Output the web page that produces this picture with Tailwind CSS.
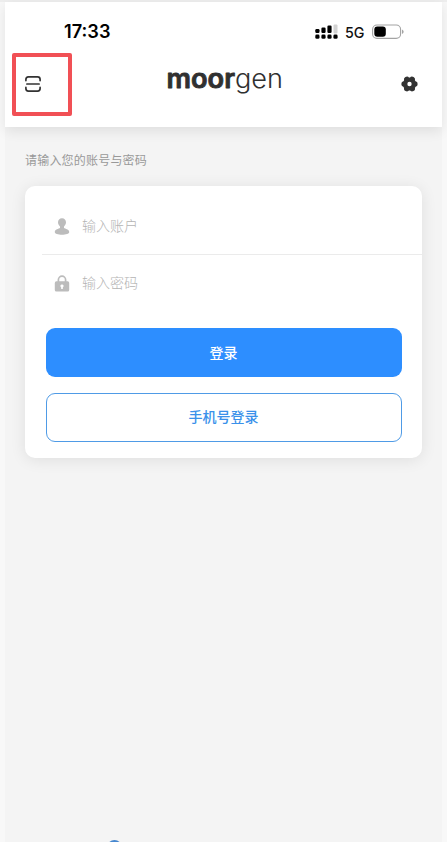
<!DOCTYPE html>
<html lang="zh-CN">
<head>
    <meta charset="UTF-8">
    <meta name="viewport" content="width=device-width, initial-scale=1.0">
    <title>moorgen</title>
    <script src="https://cdn.jsdelivr.net/npm/@tailwindcss/browser@4"></script>
</head>
<body class="h-screen overflow-hidden bg-[#f8f8f8] font-['Inter','Noto_Sans_CJK_SC',sans-serif]">
    <div class="h-screen flex flex-col border-t-2 border-[#eeeeee]">
        <div class="flex-1 min-h-0 ml-[5px] mr-[5px] flex flex-col bg-[#f4f4f4]">

            <header class="h-[125px] shrink-0 bg-white shadow-[0_4px_12px_rgba(0,0,0,0.09)]">
                <!-- Status bar -->
                <div class="h-[51px] pt-[9px] pl-[59px] pr-[37px] flex items-center justify-between">
                    <svg class="w-[48px] h-6" viewBox="0 0 48 24">
                        <text x="0" y="18" font-size="18" font-weight="600" textLength="46.5" lengthAdjust="spacingAndGlyphs" fill="#000">17:33</text>
                    </svg>
                    <div class="flex items-center">
                        <svg class="w-6 h-4" viewBox="0 0 24 16">
                            <g fill="#000">
                                <rect x="0.3" y="5" width="4.2" height="4" rx="1.2"/>
                                <rect x="6.4" y="3.5" width="4.2" height="5.5" rx="1.2"/>
                                <rect x="12.4" y="1.5" width="4.2" height="7.5" rx="1.2"/>
                                <rect x="0.3" y="10.6" width="4.2" height="4.2" rx="1.4"/>
                                <rect x="6.4" y="10.6" width="4.2" height="4.2" rx="1.4"/>
                                <rect x="12.4" y="10.6" width="4.2" height="4.2" rx="1.4"/>
                                <rect x="18.4" y="10.6" width="4.2" height="4.2" rx="1.4"/>
                            </g>
                            <rect x="18.5" y="0.5" width="4" height="9" rx="1" fill="#d2d2d2"/>
                        </svg>
                        <svg class="w-5 h-6 ml-[6px]" viewBox="0 0 20 24">
                            <text x="0" y="17.5" font-size="15" font-weight="500" textLength="19.5" lengthAdjust="spacingAndGlyphs" fill="#111">5G</text>
                        </svg>
                        <svg class="w-[33px] h-4 ml-[7px]" viewBox="0 0 33 16">
                            <rect x="0.6" y="1" width="28" height="13.4" rx="4.4" fill="#fff" stroke="#a3a3a3" stroke-width="1.1"/>
                            <rect x="2.3" y="2.6" width="11.5" height="10.2" rx="3" fill="#000"/>
                            <path d="M30.2 5.6c1.8.8 1.8 3.6 0 4.4z" fill="#8f8f8f"/>
                        </svg>
                    </div>
                </div>

                <!-- Navigation bar -->
                <div class="h-[63px] pl-[7px] pr-[24px] flex items-center justify-between">
                    <div class="w-[60px] h-[63px] border-4 border-[#f15055] rounded-[2px] pl-[9px] pb-px flex items-center">
                        <svg class="w-4 h-4" viewBox="0 0 16 16" fill="none" stroke="#333" stroke-width="1.7" stroke-linecap="round" stroke-linejoin="round">
                            <path d="M0.9 4.6V3.4Q0.9 0.9 3.4 0.9H12.6Q15.1 0.9 15.1 3.4V4.6"/>
                            <path d="M1.9 8H14.1"/>
                            <path d="M0.9 11.4V12.6Q0.9 15.1 3.4 15.1H12.6Q15.1 15.1 15.1 12.6V11.4"/>
                        </svg>
                    </div>
                    <!-- Wordmark: heavy rounded "moor", thin "gen" -->
                    <svg class="w-[120px] h-[48px] ml-[-24px]" viewBox="0 0 120 48" fill="#303030">
                        <text x="1.5" y="26.6" font-size="26" font-weight="600" textLength="68.5" lengthAdjust="spacingAndGlyphs" stroke="#303030" stroke-width="0.8" stroke-linejoin="round">moor</text>
                        <text x="70" y="26.8" font-size="26.5" font-weight="300" textLength="48" lengthAdjust="spacingAndGlyphs">gen</text>
                    </svg>
                    <svg class="w-[17px] h-4 mb-px" viewBox="0 0 17 16">
                        <g stroke="#333" stroke-width="5.4" stroke-linecap="round">
                            <path d="M3.1 8H13.9"/>
                            <path d="M5.8 3.3L11.2 12.7"/>
                            <path d="M11.2 3.3L5.8 12.7"/>
                        </g>
                        <circle cx="8.5" cy="8" r="6.6" fill="#333"/>
                        <circle cx="8.5" cy="8" r="2.2" fill="#fff"/>
                    </svg>
                </div>
            </header>

            <main class="pl-[20px] pr-[20px] pt-[25px]">
                <p class="h-[18px] text-xs leading-[18px] tracking-[0.2px] text-[#999]">请输入您的账号与密码</p>

                <form class="mt-[16px] h-[272px] rounded-[10px] bg-white pt-[12px] shadow-[0_2px_16px_rgba(0,0,0,0.09)]">
                    <label class="ml-[17px] h-[57px] pl-[12px] flex items-center border-b border-[#ebebeb]">
                        <svg class="w-4 h-[17px]" viewBox="0 0 16 17" fill="#bcbcbc">
                            <path d="M8 0.3C10.5 0.3 12 2 12 4.3C12 6 11.2 7.4 10 8.4V10C11.2 10.8 15.2 11.2 15.2 14C15.2 16 11.8 16.7 8 16.7S0.8 16 0.8 14C0.8 11.2 4.8 10.8 6 10V8.4C4.8 7.4 4 6 4 4.3C4 2 5.5 0.3 8 0.3Z"/>
                        </svg>
                        <span class="ml-[12px] text-sm font-light text-[#b4b4b4]">输入账户</span>
                    </label>
                    <label class="ml-[17px] h-[56px] pl-[12px] flex items-center">
                        <svg class="w-4 h-[17px]" viewBox="0 0 16 17">
                            <path d="M4.4 8V4.8a3.6 3.6 0 0 1 7.2 0V8" fill="none" stroke="#bcbcbc" stroke-width="1.7"/>
                            <rect x="0.8" y="6.3" width="14.4" height="10.2" rx="1.6" fill="#bcbcbc"/>
                            <path d="M8 9.4a1.6 1.6 0 0 1 .8 3V14H7.2v-1.6a1.6 1.6 0 0 1 .8-3z" fill="#fff"/>
                        </svg>
                        <span class="ml-[12px] text-sm font-light text-[#b4b4b4]">输入密码</span>
                    </label>

                    <div class="mt-[17px] ml-[20.5px] mr-[20.5px] flex flex-col gap-4">
                        <button type="button" class="h-[49px] rounded-[9px] bg-[#2d8eff] text-sm font-medium text-white">登录</button>
                        <button type="button" class="h-[49px] rounded-[9px] border border-[#4f9be6] bg-white pb-px text-sm font-medium text-[#3a91ea]">手机号登录</button>
                    </div>
                </form>
            </main>

            <!-- Agreement checkbox, only its top edge is in view -->
            <div class="mt-auto h-[2px] pl-[102px] overflow-hidden">
                <div class="w-[15px] h-[15px] rounded-full bg-[#4687cf]"></div>
            </div>
        </div>
    </div>
</body>
</html>
